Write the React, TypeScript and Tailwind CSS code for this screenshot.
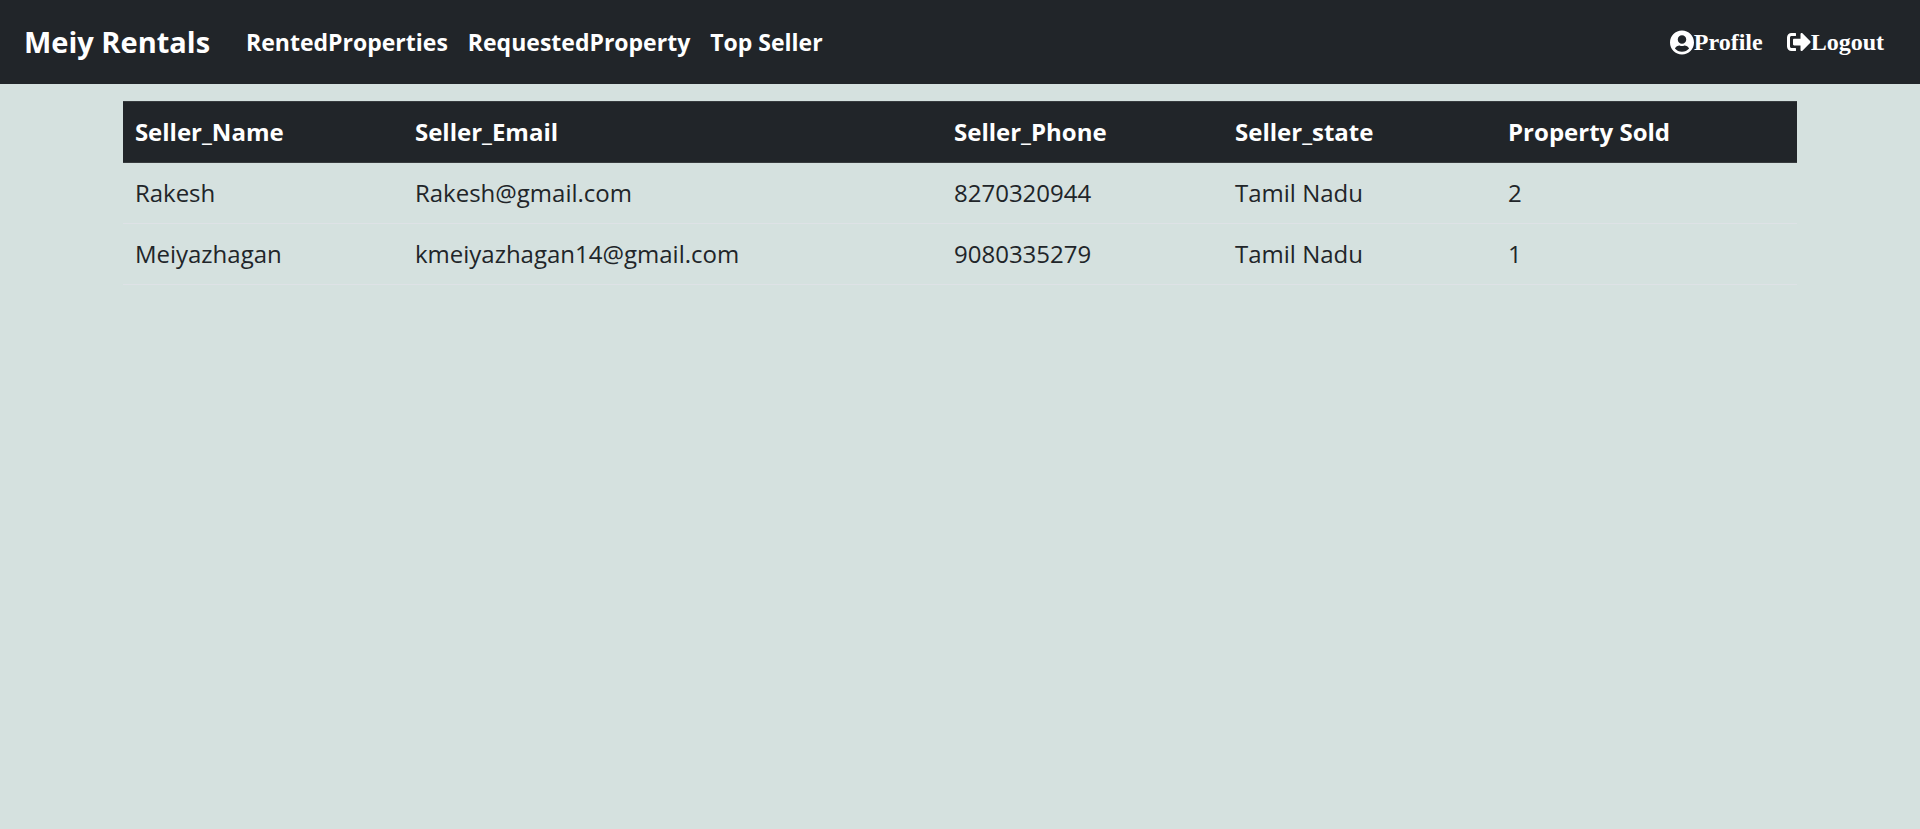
import type { ReactNode } from "react";
import { FaSignOutAlt, FaUserCircle } from "react-icons/fa";

type Seller = {
  name: string;
  email: string;
  phone: string;
  state: string;
  sold: number;
};

const sellers: Seller[] = [
  { name: "Rakesh", email: "Rakesh@gmail.com", phone: "8270320944", state: "Tamil Nadu", sold: 2 },
  { name: "Meiyazhagan", email: "kmeiyazhagan14@gmail.com", phone: "9080335279", state: "Tamil Nadu", sold: 1 },
];

const columns = [
  { label: "Seller_Name", width: "w-[280px]" },
  { label: "Seller_Email", width: "w-[539px]" },
  { label: "Seller_Phone", width: "w-[281px]" },
  { label: "Seller_state", width: "w-[273px]" },
  { label: "Property Sold", width: "w-[301px]" },
];

const links = ["RentedProperties", "RequestedProperty", "Top Seller"];

function Cell({ children }: { children: ReactNode }) {
  return <td className="border-b border-[#dee2e6] p-3">{children}</td>;
}

function Navbar() {
  return (
    <nav className="flex min-h-[84px] flex-wrap items-center bg-[#212529] px-6 font-bold text-white">
      <a href="#" className="mr-9 text-[29px]">Meiy Rentals</a>
      <ul className="flex flex-wrap items-center gap-5 text-[23px]">
        {links.map((label) => (
          <li key={label}>
            <a href="#">{label}</a>
          </li>
        ))}
      </ul>
      <ul className="ml-auto flex items-center gap-6 pr-3 font-['Liberation_Serif',serif] text-2xl">
        <li>
          <a href="#" className="flex items-center">
            <FaUserCircle className="h-[25px] w-6" />
            Profile
          </a>
        </li>
        <li>
          <a href="#" className="flex items-center">
            <FaSignOutAlt className="size-6" />
            Logout
          </a>
        </li>
      </ul>
    </nav>
  );
}

export default function App() {
  return (
    <div className="min-h-screen bg-[#d5e1df] font-['Comic_Sans_MS','Open_Sans',sans-serif] text-[#212529]">
      <Navbar />
      <main className="px-[6.4%] pt-[17px]">
        <table className="w-full table-fixed border-collapse text-left text-2xl leading-9">
          <thead className="bg-[#212529] text-white">
            <tr>
              {columns.map(({ label, width }) => (
                <th key={label} scope="col" className={`border-y border-[#373b3e] p-3 font-bold ${width}`}>
                  {label}
                </th>
              ))}
            </tr>
          </thead>
          <tbody>
            {sellers.map((seller) => (
              <tr key={seller.email}>
                <Cell>{seller.name}</Cell>
                <Cell>{seller.email}</Cell>
                <Cell>{seller.phone}</Cell>
                <Cell>{seller.state}</Cell>
                <Cell>{seller.sold}</Cell>
              </tr>
            ))}
          </tbody>
        </table>
      </main>
    </div>
  );
}
